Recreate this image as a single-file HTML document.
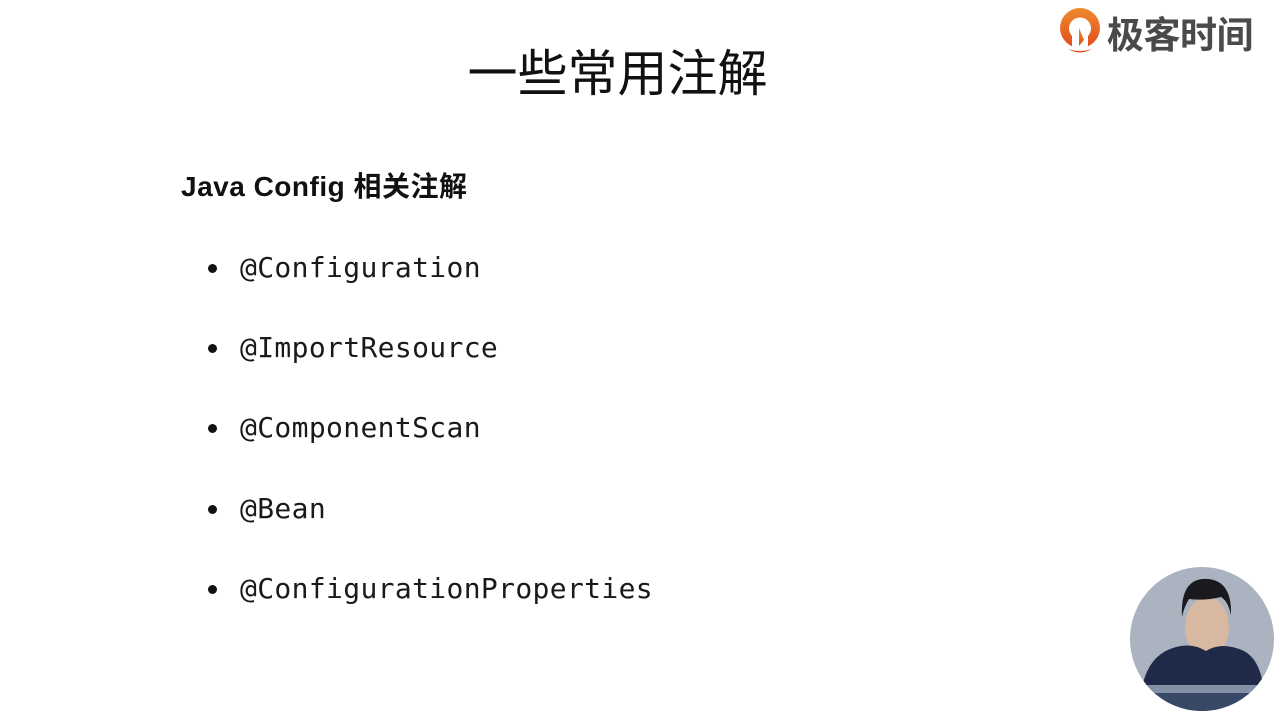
<!DOCTYPE html>
<html><head><meta charset="utf-8"><style>
html,body{margin:0;padding:0}
body{width:1287px;height:726px;background:#fff;position:relative;overflow:hidden;font-family:"Liberation Sans","Noto Sans CJK SC",sans-serif;color:#111}
.t{position:absolute;left:0;width:1235px;text-align:center;top:43px;font-size:50px;line-height:62px;font-family:"Liberation Sans","Noto Sans CJK SC",sans-serif;color:#111}
.h{position:absolute;left:181px;top:170px;font-size:28px;font-weight:bold;line-height:34px;letter-spacing:0.5px}
.b{position:absolute;left:240px;font-family:"DejaVu Sans Mono","Liberation Mono",monospace;font-size:28px;line-height:34px;color:#1a1a1a;letter-spacing:0.35px}
.d{position:absolute;left:208px;width:9px;height:9px;border-radius:50%;background:#111}
.logo{position:absolute;left:1107px;top:7px;font-size:37px;line-height:50px;color:#4a4a4a;font-weight:bold;font-family:"Noto Sans CJK SC",sans-serif;letter-spacing:-0.5px}
</style></head><body>
<div class="t">一些常用注解</div>
<div class="h">Java Config 相关注解</div>
<div class="d" style="top:264px"></div><div class="b" style="top:251px">@Configuration</div>
<div class="d" style="top:344px"></div><div class="b" style="top:331px">@ImportResource</div>
<div class="d" style="top:424px"></div><div class="b" style="top:411px">@ComponentScan</div>
<div class="d" style="top:505px"></div><div class="b" style="top:492px">@Bean</div>
<div class="d" style="top:585px"></div><div class="b" style="top:572px">@ConfigurationProperties</div>
<svg style="position:absolute;left:1058px;top:6px" width="44" height="50" viewBox="0 0 44 50">
<defs><linearGradient id="g" x1="0" y1="0" x2="0" y2="1"><stop offset="0" stop-color="#f08a30"/><stop offset="1" stop-color="#e0501a"/></linearGradient></defs>
<path d="M22 2a20 20 0 0 0-8 38.3V30a11 11 0 1 1 16 0v10.3A20 20 0 0 0 22 2z" fill="url(#g)"/>
<path d="M21 22v18l5-6z" fill="url(#g)"/>
<path d="M10 43q12 7 24 0q-12 4-24 0z" fill="#e0501a"/>
</svg>
<div class="logo">极客时间</div>
<svg style="position:absolute;left:1130px;top:567px" width="144" height="144" viewBox="0 0 144 144">
<defs><clipPath id="c"><circle cx="72" cy="72" r="72"/></clipPath></defs>
<g clip-path="url(#c)">
<rect width="144" height="144" fill="#aab3bf"/>
<ellipse cx="77" cy="60" rx="22" ry="30" fill="#d8b8a0"/>
<path d="M52 50q-2-40 26-38q24 2 23 36q-3-14-10-18q-16 4-32 2q-5 8-7 18z" fill="#1a1a1e"/>
<path d="M10 144q0-50 30-62q20-8 36 2q16-10 38 0q22 12 20 60z" fill="#1f2a48"/>
<rect x="0" y="118" width="144" height="8" fill="#8390a8"/>
<rect x="0" y="126" width="144" height="18" fill="#3a4868"/>
</g></svg>
</body></html>
